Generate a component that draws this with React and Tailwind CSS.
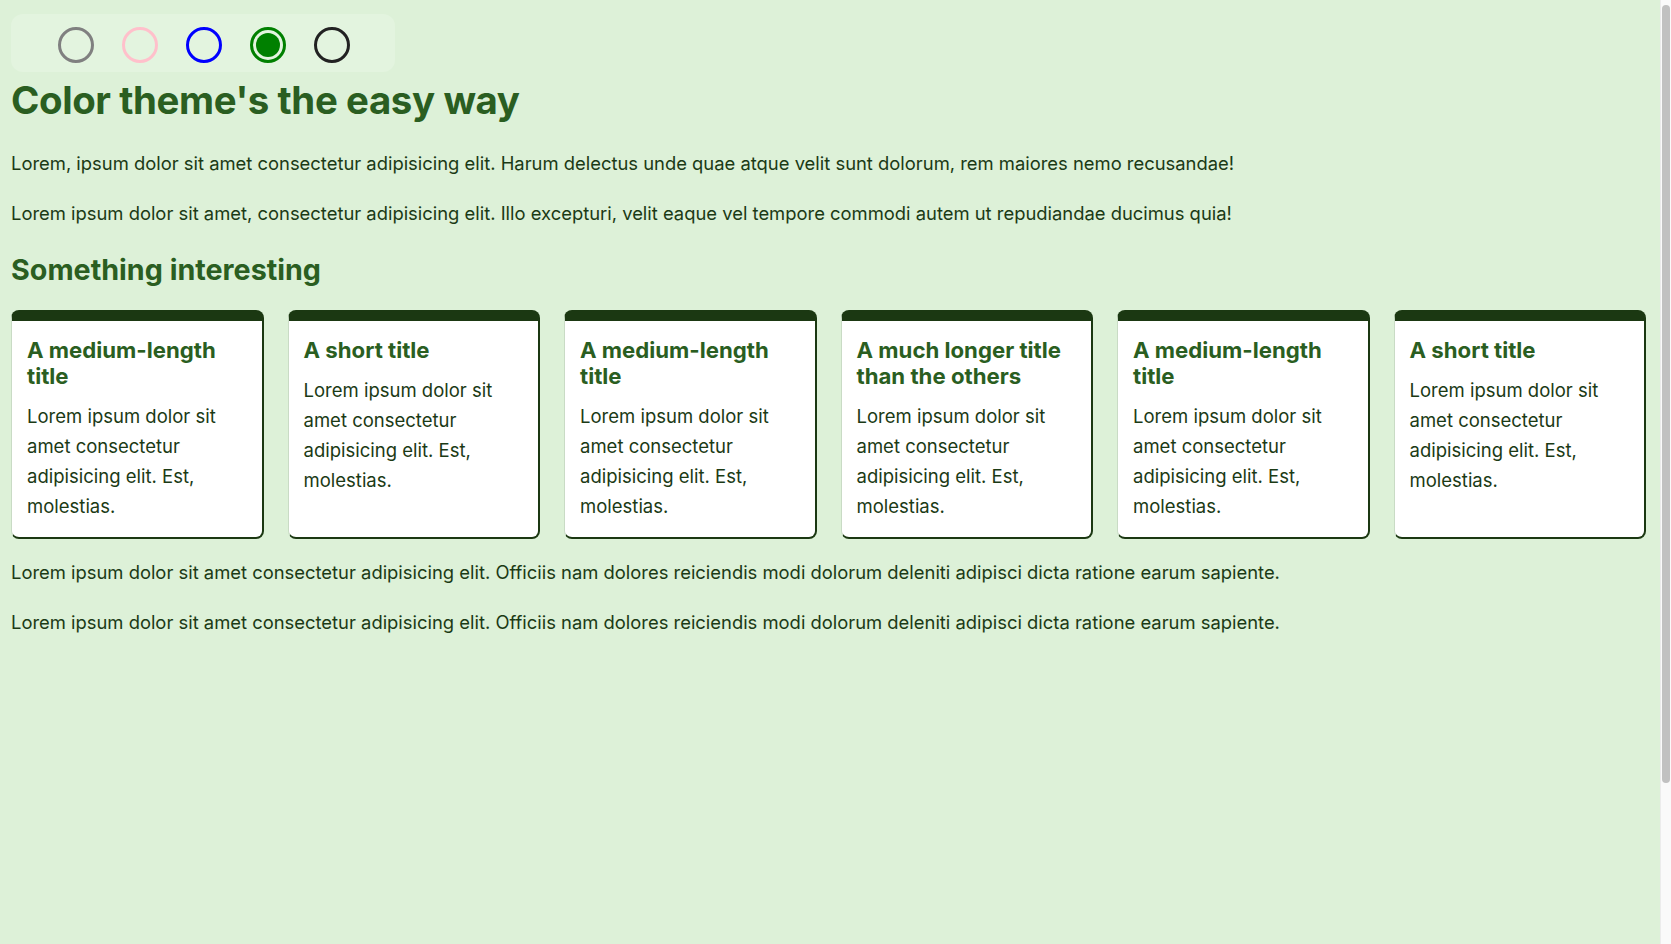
import React from "react";

const swatches = [
    { name: "gray", ring: "border-[#808080]", checked: false },
    { name: "pink", ring: "border-[#ffc0cb]", checked: false },
    { name: "blue", ring: "border-[#0000ff]", checked: false },
    { name: "green", ring: "border-[#008000]", checked: true },
    { name: "dark", ring: "border-[#222222]", checked: false },
];

const cards = [
    "A medium-length title",
    "A short title",
    "A medium-length title",
    "A much longer title than the others",
    "A medium-length title",
    "A short title",
];

const App = () => {
    return (
        <div className="flex h-screen overflow-hidden bg-[#ddf1d8] text-[#1b3a15] [font-family:Inter,'Noto_Sans',sans-serif]">
            <main className="flex-1 pl-[11px] pr-[14px] pt-[14px]">
                <div className="flex items-end gap-[28px] w-[384px] h-[58px] pl-[47px] pb-[9px] rounded-xl bg-[#e3f4df]">
                    {swatches.map((s) => (
                        <span key={s.name} className={`w-[36px] h-[36px] rounded-full border-[3px] ${s.ring} flex items-center justify-center`}>
                            {s.checked && <span className="w-[24px] h-[24px] rounded-full bg-[#008000]" />}
                        </span>
                    ))}
                </div>

                <h1 className="mt-[4px] text-[38.4px] leading-[48px] font-bold tracking-[-0.01em] text-[#2a5e21]">Color theme's the easy way</h1>

                <p className="mt-[24px] text-[18.4px] leading-[30px]">
                    Lorem, ipsum dolor sit amet consectetur adipisicing elit. Harum delectus unde quae atque velit sunt dolorum, rem maiores nemo recusandae!
                </p>
                <p className="mt-[20px] text-[18.4px] leading-[30px]">
                    Lorem ipsum dolor sit amet, consectetur adipisicing elit. Illo excepturi, velit eaque vel tempore commodi autem ut repudiandae ducimus quia!
                </p>

                <h2 className="mt-[24px] text-[28.7px] leading-[36px] font-bold text-[#2a5e21]">Something interesting</h2>

                <div className="mt-[22px] grid grid-cols-6 gap-[24px]">
                    {cards.map((title, i) => (
                        <div key={i} className="bg-white rounded-lg border-t-[11px] border-t-[#1b3812] border-r-2 border-r-[#1b3812] border-b-2 border-b-[#1b3812] border-l border-l-[#c9dbc5] pt-4 pb-4 pl-[15px] pr-4">
                            <h3 className="text-[22.2px] leading-[26px] font-bold text-[#2a5e21]">{title}</h3>
                            <p className="mt-[12px] text-[18.5px] leading-[30px]">
                                Lorem ipsum dolor sit amet consectetur adipisicing elit. Est, molestias.
                            </p>
                        </div>
                    ))}
                </div>

                <p className="mt-[18px] text-[18.4px] leading-[30px]">
                    Lorem ipsum dolor sit amet consectetur adipisicing elit. Officiis nam dolores reiciendis modi dolorum deleniti adipisci dicta ratione earum sapiente.
                </p>
                <p className="mt-[20px] text-[18.4px] leading-[30px]">
                    Lorem ipsum dolor sit amet consectetur adipisicing elit. Officiis nam dolores reiciendis modi dolorum deleniti adipisci dicta ratione earum sapiente.
                </p>
            </main>

            {/* window scrollbar */}
            <aside className="w-[11px] shrink-0 bg-[#fafafa] border-l border-[#ececec] pt-[5px] pl-[1px]">
                <div className="w-[8px] h-[778px] rounded-full bg-[#c1c1c1]" />
            </aside>
        </div>
    );
};

export default App;
